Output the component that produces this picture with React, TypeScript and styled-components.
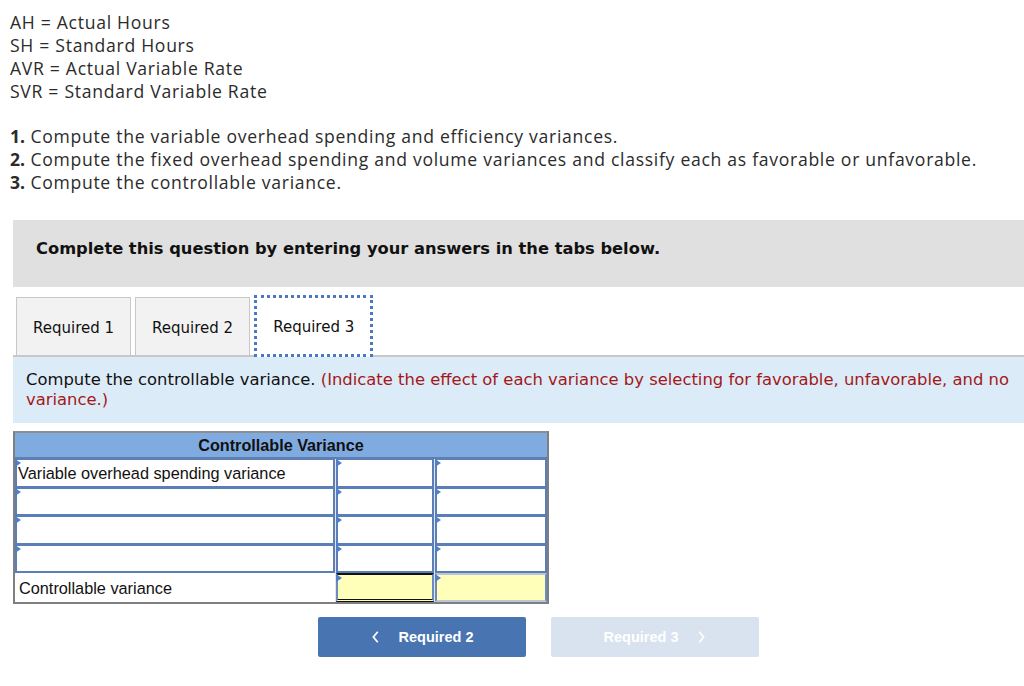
import styled, { createGlobalStyle } from 'styled-components'

const GlobalStyle = createGlobalStyle`
  html, body {
    margin: 0;
    padding: 0;
    background: #ffffff;
  }
  body {
    font-family: 'Liberation Sans', Arial, sans-serif;
    color: #222222;
  }
`

const legend = ['AH = Actual Hours', 'SH = Standard Hours', 'AVR = Actual Variable Rate', 'SVR = Standard Variable Rate']

const tasks = [
  'Compute the variable overhead spending and efficiency variances.',
  'Compute the fixed overhead spending and volume variances and classify each as favorable or unfavorable.',
  'Compute the controllable variance.',
]

const tabs = ['Required 1', 'Required 2', 'Required 3']

const inputRows = ['Variable overhead spending variance', '', '', '']

export default function App() {
  return (
    <Page>
      <GlobalStyle />
      <Intro>
        <Lines>
          {legend.map((l) => (
            <Line key={l}>{l}</Line>
          ))}
        </Lines>
        <Lines>
          {tasks.map((t, i) => (
            <Line key={t}>
              <b>{i + 1}.</b> {t}
            </Line>
          ))}
        </Lines>
      </Intro>

      <Banner>Complete this question by entering your answers in the tabs below.</Banner>

      <TabBar>
        {tabs.map((t, i) => (
          <Tab key={t} active={i === 2}>
            {t}
          </Tab>
        ))}
      </TabBar>

      <InfoPanel>
        Compute the controllable variance.{' '}
        <Hint>(Indicate the effect of each variance by selecting for favorable, unfavorable, and no variance.)</Hint>
      </InfoPanel>

      <Table>
        <HeaderCell>Controllable Variance</HeaderCell>
        {inputRows.map((label, i) => (
          <Row key={i}>
            <InputCell>
              <Marker />
              {label}
            </InputCell>
            <InputCell>
              <Marker />
            </InputCell>
            <InputCell>
              <Marker />
            </InputCell>
          </Row>
        ))}
        <Row>
          <LabelCell>Controllable variance</LabelCell>
          <TotalCell underline>
            <Marker />
          </TotalCell>
          <TotalCell>
            <Marker />
          </TotalCell>
        </Row>
      </Table>

      <Nav>
        <NavButton>
          <Chevron viewBox="0 0 10 16">
            <path d="M7 2 L2 8 L7 14" />
          </Chevron>
          Required 2
        </NavButton>
        <NavButton disabled>
          Required 3
          <Chevron viewBox="0 0 10 16">
            <path d="M3 2 L8 8 L3 14" />
          </Chevron>
        </NavButton>
      </Nav>
    </Page>
  )
}

const Page = styled('div')`
  width: 1024px;
  height: 686px;
  overflow: hidden;
  padding-top: 11px;
  box-sizing: border-box;
`

const Intro = styled('div')`
  padding-left: 10px;
  display: flex;
  flex-direction: column;
  gap: 22px;
`

const Lines = styled('div')`
  display: flex;
  flex-direction: column;
`

const Line = styled('div')`
  font-family: 'Open Sans', 'Liberation Sans', sans-serif;
  font-size: 17.6px;
  line-height: 23px;
  letter-spacing: 0.7px;
  color: #2b2b2b;
  white-space: nowrap;

  b {
    font-weight: 700;
    letter-spacing: 0;
  }
`

const Banner = styled('div')`
  margin: 26px 0 0 13px;
  height: 67px;
  box-sizing: border-box;
  background: #e0e0e0;
  padding: 0 0 10px 23px;
  display: flex;
  align-items: center;
  font-family: 'DejaVu Sans', Verdana, sans-serif;
  font-weight: 700;
  font-size: 16.3px;
  color: #111111;
`

const TabBar = styled('div')`
  margin: 10px 0 0 13px;
  padding-left: 3px;
  display: flex;
  gap: 4px;
  border-bottom: 2px solid #c8c8c8;
  height: 58px;
`

const Tab = styled('div')<{ active?: boolean }>`
  box-sizing: border-box;
  padding: 2px 16px 0;
  display: flex;
  align-items: center;
  font-family: 'DejaVu Sans', Verdana, sans-serif;
  font-size: 15px;
  color: #111111;
  background: ${(p) => (p.active ? '#ffffff' : '#f2f2f2')};
  border: ${(p) => (p.active ? '3px dotted #4a78c2' : '1px solid #c8c8c8')};
  border-bottom: ${(p) => (p.active ? '3px dotted #4a78c2' : 'none')};
  margin-top: ${(p) => (p.active ? '-2px' : '0')};
  height: ${(p) => (p.active ? '62px' : '58px')};
  z-index: ${(p) => (p.active ? 1 : 0)};
`

const InfoPanel = styled('div')`
  margin-left: 13px;
  height: 66px;
  box-sizing: border-box;
  background: #dcebf8;
  padding: 13px 13px 0;
  font-family: 'DejaVu Sans', Verdana, sans-serif;
  font-size: 16.4px;
  line-height: 20px;
  color: #111111;
`

const Hint = styled('span')`
  color: #a31919;
`

const Table = styled('div')`
  margin: 8px 0 0 13px;
  width: 536px;
  box-sizing: border-box;
  border: 2px solid #7f7f7f;
  border-top-color: #8e8e8e;
  background: #b9c6d8;
  display: flex;
  flex-direction: column;
`

const HeaderCell = styled('div')`
  height: 24px;
  background: #80abe0;
  border-bottom: 2px solid #5f7fae;
  display: flex;
  align-items: center;
  justify-content: center;
  font-weight: 700;
  font-size: 16.2px;
  color: #111111;
`

const Row = styled('div')`
  display: grid;
  grid-template-columns: 320px 98px 1fr;
  column-gap: 1px;
  height: 28.6px;
  background: #e6e6e6;
`

const InputCell = styled('div')`
  position: relative;
  box-sizing: border-box;
  background: #ffffff;
  border: 2px solid #5a7fb8;
  border-top-width: 1px;
  display: flex;
  align-items: center;
  padding: 2px 0 0 1px;
  font-size: 16.3px;
  color: #111111;
  white-space: nowrap;
`

const LabelCell = styled('div')`
  background: #ffffff;
  display: flex;
  align-items: center;
  padding: 2px 0 0 4px;
  font-size: 16.3px;
  color: #111111;
`

const TotalCell = styled('div')<{ underline?: boolean }>`
  position: relative;
  box-sizing: border-box;
  background: #ffffb9;
  border: 2px solid #6b8cc0;
  border-top: ${(p) => (p.underline ? '2px solid #111111' : '2px solid #b9c6d8')};
  border-bottom: ${(p) => (p.underline ? '3px double #111111' : '2px solid #b9c6d8')};
`

const Marker = styled('span')`
  position: absolute;
  top: -1px;
  left: -2px;
  width: 0;
  height: 0;
  border-top: 4px solid transparent;
  border-bottom: 4px solid transparent;
  border-left: 6px solid #4f7fc6;
`

const Nav = styled('div')`
  margin: 13px 0 0 318px;
  display: flex;
  gap: 25px;
`

const NavButton = styled('div')<{ disabled?: boolean }>`
  width: 208px;
  height: 40px;
  border-radius: 2px;
  background: ${(p) => (p.disabled ? '#d9e3ef' : '#4874b2')};
  color: #ffffff;
  display: flex;
  align-items: center;
  justify-content: center;
  gap: 18px;
  font-weight: 700;
  font-size: 14.5px;
`

const Chevron = styled('svg')`
  width: 10px;
  height: 14px;
  fill: none;
  stroke: #ffffff;
  stroke-width: 2;
`
